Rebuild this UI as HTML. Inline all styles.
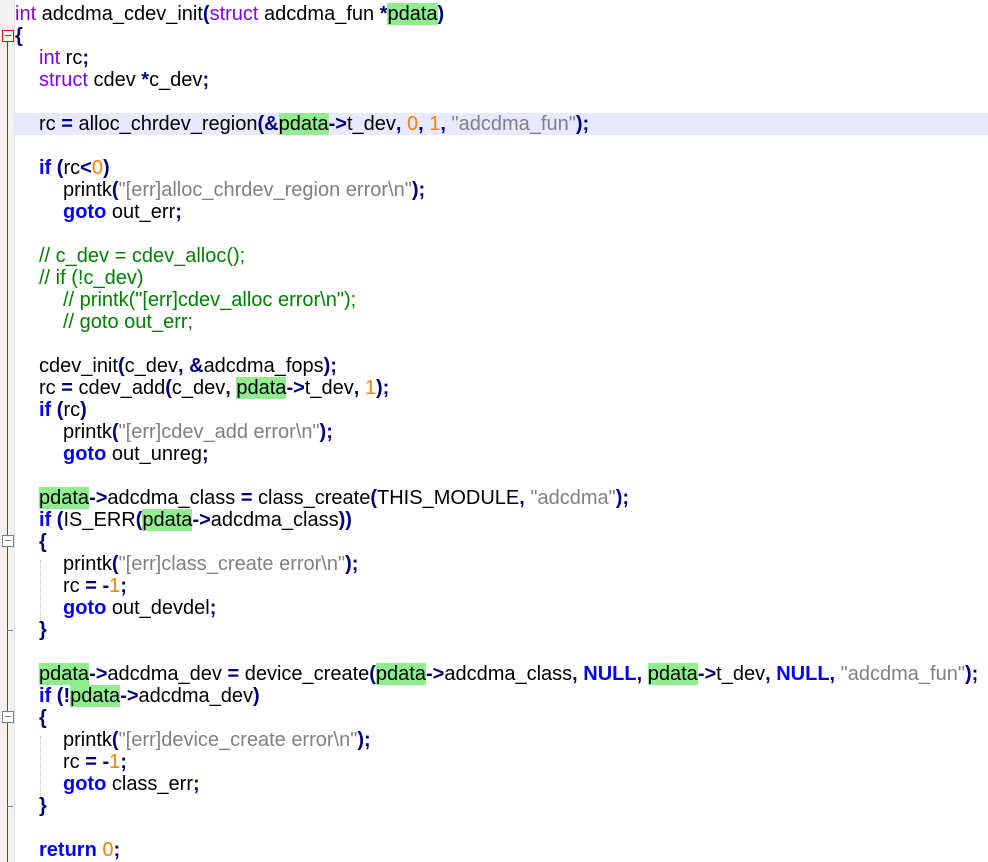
<!DOCTYPE html>
<html><head><meta charset="utf-8"><style>
body{margin:0;width:988px;height:862px;overflow:hidden;background:#fff;position:relative;font-family:"Liberation Sans",sans-serif;font-size:20px;}
#g{position:absolute;left:0;top:0;width:14px;height:862px;background:#f2f2f2;border-right:1px solid #e4e4e4}
.l{position:absolute;left:15px;height:22px;line-height:22px;white-space:pre;color:#000}
.i1{left:39px}.i2{left:63px}
.k{color:#8000ff}.b{color:#0000ff;font-weight:bold}.o{color:#000080;font-weight:bold}
.n{color:#ff8000}.s{color:#808080}.c{color:#008000}.h{background:#90ee90}
.hl{position:absolute;left:15px;width:973px;top:113px;height:22px;background:#e8e8ff}
.box{position:absolute;left:2px;width:10px;height:10px;background:#fff;border:1px solid #808080}
.box:after{content:"";position:absolute;left:2px;top:4px;width:6px;height:1px;background:#808080}
.rb{border-color:#ff0000}.rb:after{background:#ff0000}
.vl{position:absolute;left:7px;width:1px;background:#ff0000}
.tk{position:absolute;left:7px;width:6px;height:1px;background:#808080}
.ig{position:absolute;left:40px;width:0;border-left:1px dotted #c0c0c0}
</style></head><body>
<div id="g"></div>
<div class="vl" style="top:42px;height:820px"></div>
<div class="box rb" style="top:30px"></div>
<div class="box" style="top:535px"></div>
<div class="tk" style="top:630px"></div>
<div class="box" style="top:711px"></div>
<div class="tk" style="top:806px"></div>
<div class="hl"></div>
<div class="ig" style="top:560px;height:62px"></div>
<div class="ig" style="top:736px;height:62px"></div>
<div class="l" style="top:3px"><span class="k">int</span> adcdma_cdev_init<span class="o">(</span><span class="k">struct</span> adcdma_fun <span class="o">*</span><span class="h">pdata</span><span class="o">)</span></div>
<div class="l" style="top:25px"><span class="o">{</span></div>
<div class="l i1" style="top:47px"><span class="k">int</span> rc<span class="o">;</span></div>
<div class="l i1" style="top:69px"><span class="k">struct</span> cdev <span class="o">*</span>c_dev<span class="o">;</span></div>
<div class="l i1" style="top:113px">rc <span class="o">=</span> alloc_chrdev_region<span class="o">(&amp;</span><span class="h">pdata</span><span class="o">-&gt;</span>t_dev<span class="o">,</span> <span class="n">0</span><span class="o">,</span> <span class="n">1</span><span class="o">,</span> <span class="s">"adcdma_fun"</span><span class="o">);</span></div>
<div class="l i1" style="top:157px"><span class="b">if</span> <span class="o">(</span>rc<span class="o">&lt;</span><span class="n">0</span><span class="o">)</span></div>
<div class="l i2" style="top:179px">printk<span class="o">(</span><span class="s">"[err]alloc_chrdev_region error\n"</span><span class="o">);</span></div>
<div class="l i2" style="top:201px"><span class="b">goto</span> out_err<span class="o">;</span></div>
<div class="l i1 c" style="top:245px">// c_dev = cdev_alloc();</div>
<div class="l i1 c" style="top:267px">// if (!c_dev)</div>
<div class="l i2 c" style="top:289px">// printk("[err]cdev_alloc error\n");</div>
<div class="l i2 c" style="top:311px">// goto out_err;</div>
<div class="l i1" style="top:355px">cdev_init<span class="o">(</span>c_dev<span class="o">,</span> <span class="o">&amp;</span>adcdma_fops<span class="o">);</span></div>
<div class="l i1" style="top:377px">rc <span class="o">=</span> cdev_add<span class="o">(</span>c_dev<span class="o">,</span> <span class="h">pdata</span><span class="o">-&gt;</span>t_dev<span class="o">,</span> <span class="n">1</span><span class="o">);</span></div>
<div class="l i1" style="top:399px"><span class="b">if</span> <span class="o">(</span>rc<span class="o">)</span></div>
<div class="l i2" style="top:421px">printk<span class="o">(</span><span class="s">"[err]cdev_add error\n"</span><span class="o">);</span></div>
<div class="l i2" style="top:443px"><span class="b">goto</span> out_unreg<span class="o">;</span></div>
<div class="l i1" style="top:487px"><span class="h">pdata</span><span class="o">-&gt;</span>adcdma_class <span class="o">=</span> class_create<span class="o">(</span>THIS_MODULE<span class="o">,</span> <span class="s">"adcdma"</span><span class="o">);</span></div>
<div class="l i1" style="top:509px"><span class="b">if</span> <span class="o">(</span>IS_ERR<span class="o">(</span><span class="h">pdata</span><span class="o">-&gt;</span>adcdma_class<span class="o">))</span></div>
<div class="l i1" style="top:531px"><span class="o">{</span></div>
<div class="l i2" style="top:553px">printk<span class="o">(</span><span class="s">"[err]class_create error\n"</span><span class="o">);</span></div>
<div class="l i2" style="top:575px">rc <span class="o">=</span> <span class="o">-</span><span class="n">1</span><span class="o">;</span></div>
<div class="l i2" style="top:597px"><span class="b">goto</span> out_devdel<span class="o">;</span></div>
<div class="l i1" style="top:619px"><span class="o">}</span></div>
<div class="l i1" style="top:663px"><span class="h">pdata</span><span class="o">-&gt;</span>adcdma_dev <span class="o">=</span> device_create<span class="o">(</span><span class="h">pdata</span><span class="o">-&gt;</span>adcdma_class<span class="o">,</span> <span class="b">NULL</span><span class="o">,</span> <span class="h">pdata</span><span class="o">-&gt;</span>t_dev<span class="o">,</span> <span class="b">NULL</span><span class="o">,</span> <span class="s">"adcdma_fun"</span><span class="o">);</span></div>
<div class="l i1" style="top:685px"><span class="b">if</span> <span class="o">(!</span><span class="h">pdata</span><span class="o">-&gt;</span>adcdma_dev<span class="o">)</span></div>
<div class="l i1" style="top:707px"><span class="o">{</span></div>
<div class="l i2" style="top:729px">printk<span class="o">(</span><span class="s">"[err]device_create error\n"</span><span class="o">);</span></div>
<div class="l i2" style="top:751px">rc <span class="o">=</span> <span class="o">-</span><span class="n">1</span><span class="o">;</span></div>
<div class="l i2" style="top:773px"><span class="b">goto</span> class_err<span class="o">;</span></div>
<div class="l i1" style="top:795px"><span class="o">}</span></div>
<div class="l i1" style="top:839px"><span class="b">return</span> <span class="n">0</span><span class="o">;</span></div>
</body></html>
